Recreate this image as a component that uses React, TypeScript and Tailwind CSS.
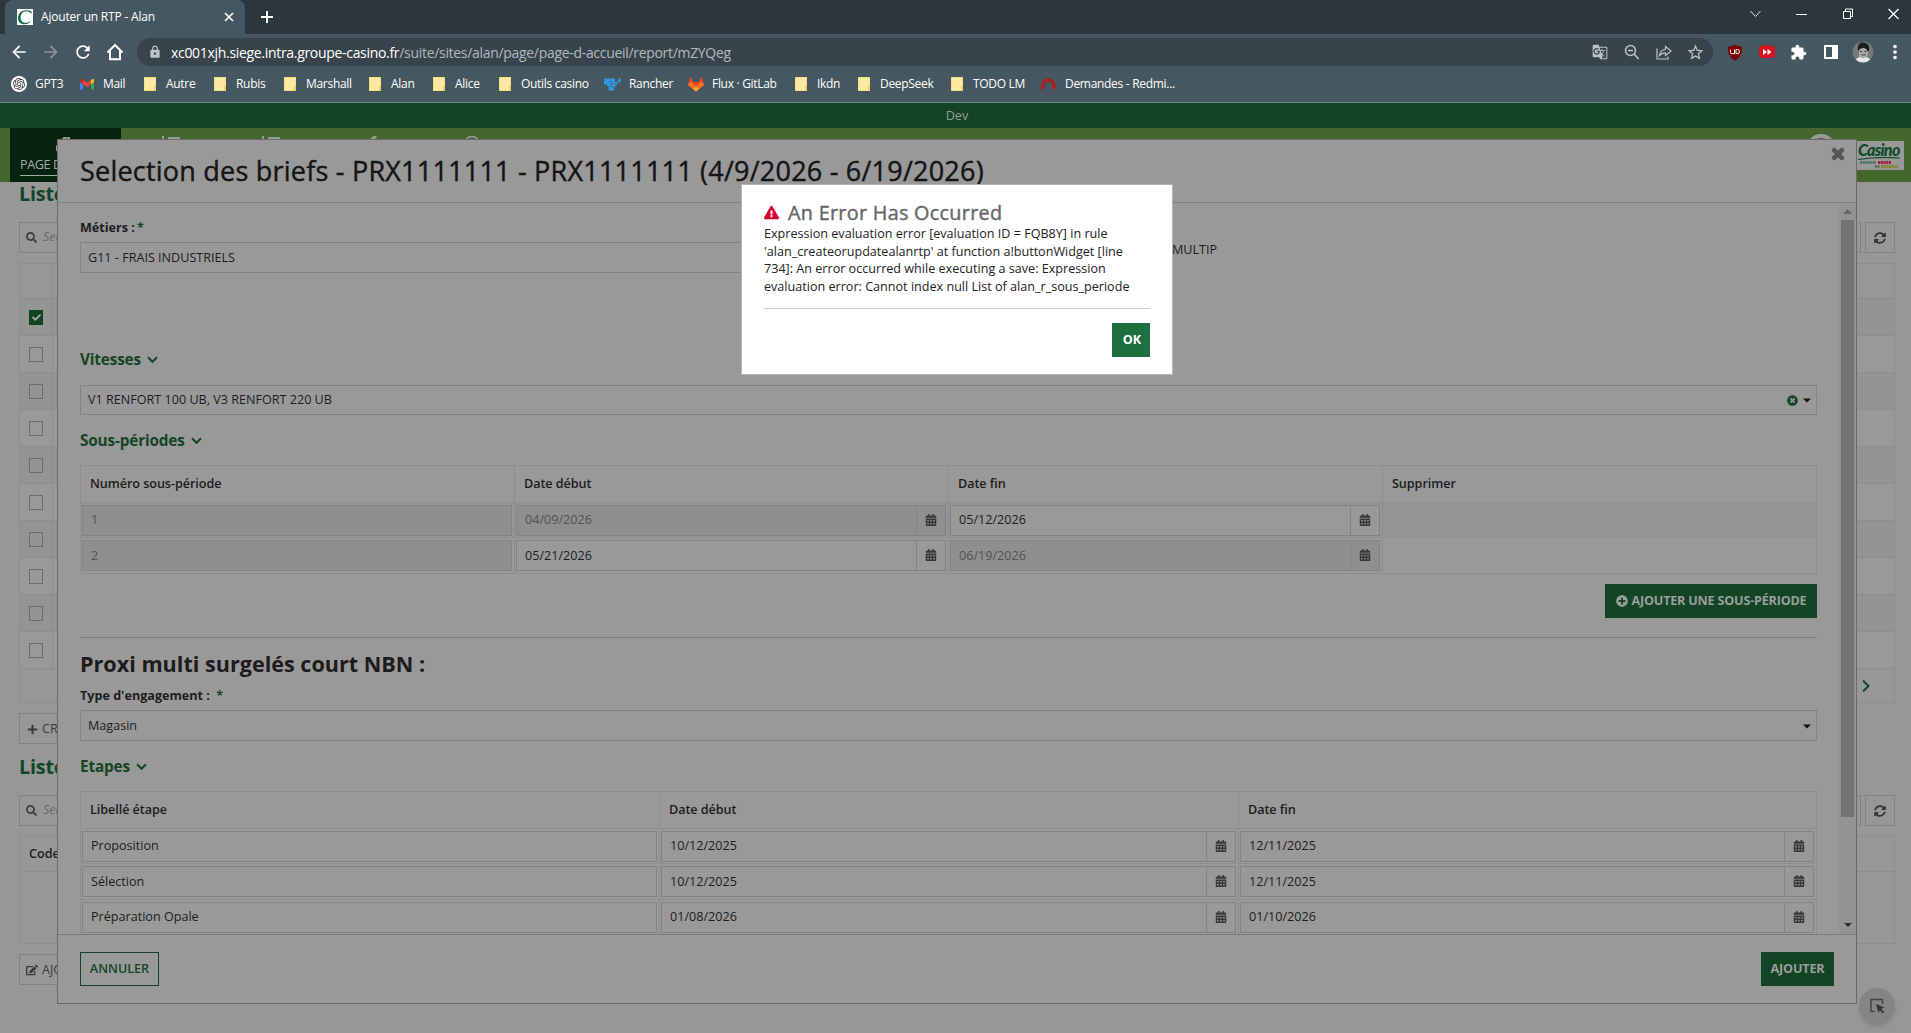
import type { ReactNode } from "react";
import {
  FaCalendarAlt,
  FaCheck,
  FaEdit,
  FaExclamationTriangle,
  FaPlus,
  FaPlusCircle,
  FaSearch,
  FaSyncAlt,
  FaTimes,
  FaTimesCircle,
} from "react-icons/fa";
import {
  MdArrowBack,
  MdArrowForward,
  MdExtension,
  MdGTranslate,
  MdLock,
  MdMoreVert,
  MdRefresh,
  MdStarBorder,
} from "react-icons/md";
import { SiOpenai } from "react-icons/si";

/* ---------- browser icons ---------- */

function FolderIcon() {
  return (
    <svg width="16" height="16" viewBox="0 0 16 16">
      <path d="M2 1h12v14H2z" fill="#f5cf62" />
      <path d="M2.500 1.500h11v8.500h-1.500v4.500H2.500z" fill="#ffe9a2" />
    </svg>
  );
}

function GptIcon() {
  return (
    <span className="flex h-4 w-4 items-center justify-center rounded-full bg-white">
      <SiOpenai size={12} color="#333" />
    </span>
  );
}

function MailIcon() {
  return (
    <svg width="16" height="16" viewBox="0 0 16 16">
      <path d="M1 4v9.5h3V7.5z" fill="#4285f4" />
      <path d="M15 4v9.5h-3V7.5z" fill="#34a853" />
      <path d="M12 3.6 15 3v3l-3 2.3z" fill="#fbbc04" />
      <path d="M1 3l3 .6v4.7L1 6z" fill="#c5221f" />
      <path d="M4 3.8 8 7l4-3.2v4.5L8 11.3 4 8.300z" fill="#ea4335" />
    </svg>
  );
}

function RancherIcon() {
  return (
    <svg width="17" height="16" viewBox="0 0 17 16">
      <path
        d="M0 2.500h11V6h2.500V3.500H15V2h1.500v4.500H13v2.500h-1.500v2H10v3.500H4.500V10H3V8.500H0z"
        fill="#3497da"
      />
      <path d="M4.500 5.500h3v2h4M6.500 8v2.500h3" stroke="#2874b0" fill="none" />
    </svg>
  );
}

function GitlabIcon() {
  return (
    <svg width="16" height="16" viewBox="0 0 16 16">
      <path d="M8 15.500 0 9.300 2.500 1l2.700 5h5.600l2.700-5L16 9.300z" fill="#fc6d26" />
      <path d="M2.500 1l2.700 5h5.600l2.700-5 1.300 5-3.600.8L8 11 4.800 6.800 1.200 6z" fill="#e24329" />
      <path d="M8 15.500 4.800 12.800 8 10.500l3.200 2.300z" fill="#fca326" />
    </svg>
  );
}

function RedmineIcon() {
  return (
    <svg width="17" height="16" viewBox="0 0 17 16">
      <path
        d="M2.500 13.500C2.500 6 5 4 8.500 4s6 2 6 9.500"
        stroke="#b3191f"
        strokeWidth="3.400"
        strokeDasharray="3.600 .5"
        fill="none"
      />
    </svg>
  );
}

const bookmarks: { label: string; icon: ReactNode; width: string }[] = [
  { label: "GPT3", icon: <GptIcon />, width: "w-[68px]" },
  { label: "Mail", icon: <MailIcon />, width: "w-[63px]" },
  { label: "Autre", icon: <FolderIcon />, width: "w-[70px]" },
  { label: "Rubis", icon: <FolderIcon />, width: "w-[70px]" },
  { label: "Marshall", icon: <FolderIcon />, width: "w-[85px]" },
  { label: "Alan", icon: <FolderIcon />, width: "w-[64px]" },
  { label: "Alice", icon: <FolderIcon />, width: "w-[66px]" },
  { label: "Outils casino", icon: <FolderIcon />, width: "w-[107px]" },
  { label: "Rancher", icon: <RancherIcon />, width: "w-[84px]" },
  { label: "Flux · GitLab", icon: <GitlabIcon />, width: "w-[105px]" },
  { label: "Ikdn", icon: <FolderIcon />, width: "w-[63px]" },
  { label: "DeepSeek", icon: <FolderIcon />, width: "w-[93px]" },
  { label: "TODO LM", icon: <FolderIcon />, width: "w-[91px]" },
  { label: "Demandes - Redmi...", icon: <RedmineIcon />, width: "w-[150px]" },
];

function TabStrip() {
  return (
    <div className="flex h-[34px] bg-[#2b363d] pl-[5px] text-white">
      <div className="flex h-full w-[240px] items-center rounded-t-lg bg-[#455760] pl-3 pr-[11px]">
        <svg width="16" height="16" viewBox="0 0 16 16">
          <path d="M0 0h16v16H0z" fill="#fff" />
          <path
            d="M14.500 2.500V5C13 2.800 11.300 2.200 9.500 2.200 5.500 2.200 3.600 5 3.600 8.500c0 3.300 2 5.300 5 5.300 2 0 3.700-.6 5.200-1.800-1.400 2.100-3.600 3.300-6.300 3.300C3.600 15.300 1 12.800 1 9c0-4.300 3.300-7.800 8.300-7.800 2 0 3.700.5 5.200 1.300z"
            fill="#0f6b3a"
          />
        </svg>
        <span className="ml-2 text-[12px] tracking-[-0.2px]">Ajouter un RTP - Alan</span>
        <svg className="ml-auto" width="10" height="10" viewBox="0 0 10 10">
          <path d="M1 1l8 8M9 1L1 9" stroke="#fff" strokeWidth="1.600" />
        </svg>
      </div>
      <svg className="ml-4 mt-[11px]" width="12" height="12" viewBox="0 0 12 12">
        <path d="M6 0v12M0 6h12" stroke="#fff" strokeWidth="2" />
      </svg>
      <div className="ml-auto mr-3 mt-2 flex h-3 items-center gap-[35px]">
        <svg width="11" height="12" viewBox="0 0 11 12">
          <path d="M.5 3l5 5.500 5-5.500" stroke="#dfe3e5" fill="none" />
        </svg>
        <svg width="11" height="12" viewBox="0 0 11 12">
          <path d="M0 6.500h11" stroke="#fff" />
        </svg>
        <svg width="11" height="12" viewBox="0 0 11 12">
          <path d="M1.500 3.500h7v7h-7zM3.500 3V1h7v7.500H9" stroke="#fff" fill="none" />
        </svg>
        <svg width="11" height="12" viewBox="0 0 11 12">
          <path d="M.5 1l10 10M10.500 1l-10 10" stroke="#fff" strokeWidth="1.200" />
        </svg>
      </div>
    </div>
  );
}

function Toolbar() {
  return (
    <div className="flex h-9 items-center bg-[#455760] pl-[9px] text-white">
      <MdArrowBack size={20} />
      <MdArrowForward size={20} className="ml-3 text-[#8b979d]" />
      <MdRefresh size={20} className="ml-3" />
      <svg className="ml-3" width="20" height="20" viewBox="0 0 20 20">
        <path d="M2.500 10.500 10 3l7.500 7.500M5 9v8.200h10V9" stroke="#fff" strokeWidth="2" fill="none" />
      </svg>
      <div className="ml-3 flex h-7 w-[1576px] items-center rounded-full bg-[#38444b] pl-[11px] pr-2 text-[#bcc3c6]">
        <MdLock size={14} />
        <span className="ml-[9px] text-[14px] tracking-[-0.31px] text-[#b0b8bc]">
          <span className="text-white">xc001xjh.siege.intra.groupe-casino.fr</span>
          /suite/sites/alan/page/page-d-accueil/report/mZYQeg
        </span>
        <MdGTranslate size={16} className="ml-auto" />
        <svg className="ml-4" width="16" height="16" viewBox="0 0 16 16">
          <circle cx="6.500" cy="6.500" r="5" stroke="#bcc3c6" strokeWidth="1.500" fill="none" />
          <path d="M4 6.500h5M10.200 10.200l4.500 4.800" stroke="#bcc3c6" strokeWidth="1.600" />
        </svg>
        <svg className="ml-4" width="16" height="16" viewBox="0 0 16 16">
          <path
            d="M1 4.500V15h11v-2.500M3.500 11.500c.5-3.800 2.500-5.800 6-6V2.500L15 7l-5.500 4.500V8.800c-2.600 0-4.400.9-6 2.700z"
            stroke="#bcc3c6"
            strokeWidth="1.200"
            fill="none"
          />
        </svg>
        <MdStarBorder size={19} className="ml-[14px]" />
      </div>
      <div className="ml-[14px] flex items-center">
        <svg width="16" height="17" viewBox="0 0 16 17">
          <path d="M8 .5c2 1.500 4.500 2 7 2 0 6-.5 10.500-7 14-6.500-3.500-7-8-7-14 2.500 0 5-.5 7-2z" fill="#800000" />
          <path d="M3.500 5.500v3.200q0 1 1.200 1H7.500V5.500M9 5.500v4.200h1.500q2-.3 2-2.100t-2-2.100z" stroke="#fff" fill="none" />
        </svg>
        <svg className="ml-4" width="16" height="16" viewBox="0 0 16 16">
          <rect x="0" y="1.500" width="16" height="12.500" rx="4" fill="#d8121a" />
          <path d="M4 5l4 3-4 3zM8.500 5l4 3-4 3z" fill="#fff" />
        </svg>
        <MdExtension size={17} className="ml-[15px]" />
        <svg className="ml-4" width="16" height="16" viewBox="0 0 16 16">
          <path d="M1 1h14v14H1zM3 3v10h6V3z" fill="#fff" fillRule="evenodd" />
        </svg>
        <svg className="ml-[13px]" width="22" height="22" viewBox="0 0 22 22">
          <clipPath id="face">
            <circle cx="11" cy="11" r="10.500" />
          </clipPath>
          <g clipPath="url(#face)">
            <path d="M0 0h22v22H0z" fill="#77787a" />
            <path d="M7 18V8q4-4 9 0v6l-3 4z" fill="#a8a8a8" />
            <path d="M6 10C5 3 8 1 11.500 1.500S18 4 17 9.500l-1.500 1C15 7 11 6 8 8z" fill="#1d1d1d" />
            <path d="M3 22q0-5 5-6 3 2.500 6 0 5 1 5 6z" fill="#e6e6e6" />
            <path d="M8 10.500h2m2.500 0h2M9.500 13.500q2 1.200 4 0" stroke="#333" fill="none" />
          </g>
        </svg>
        <MdMoreVert size={22} className="ml-[10px]" />
      </div>
    </div>
  );
}

function BookmarksBar() {
  return (
    <div className="flex h-[33px] items-center border-b border-[#73857f] bg-[#455760] pb-1 pl-[11px] text-[12px] text-white">
      {bookmarks.map((b) => (
        <div key={b.label} className={`flex shrink-0 items-center gap-2 ${b.width}`}>
          {b.icon}
          <span className="whitespace-nowrap tracking-[-0.3px]">{b.label}</span>
        </div>
      ))}
    </div>
  );
}

/* ---------- page behind the dialog ---------- */

function SearchRow() {
  return (
    <div className="flex h-[31px] justify-between">
      <div className="flex w-[1842px] items-center border border-[#828282] pl-1.5 text-[12.6px] italic text-[#6a6a6a]">
        <FaSearch size={11} className="mr-1.5 text-[#3c3c3c]" />
        Search
      </div>
      <div className="flex w-[30px] items-center justify-center border border-[#828282] text-[#333]">
        <FaSyncAlt size={12} />
      </div>
    </div>
  );
}

function SiteNav() {
  return (
    <div className="flex h-[54px] bg-[#44672f] pl-[10px]">
      <div className="w-[111px] bg-[#06230f] pl-[10px] text-[#a4aaa6]">
        <svg className="ml-[36px] mt-[9px]" width="18" height="14" viewBox="0 0 18 14">
          <path d="M0 9 7.500 0H10l1.500 1V0H14v5l4 4v5H0z" fill="#999" />
        </svg>
        <div className="w-[91px] overflow-hidden whitespace-nowrap border-b border-[#a4aaa6] pb-px pt-[5px] text-[12.600px] leading-[18px] tracking-[-0.4px]">
          PAGE D'ACCUEIL
        </div>
      </div>
      <div className="flex gap-[82px] pl-[41px] pt-[8px]">
        <svg width="18" height="12" viewBox="0 0 18 12">
          <path d="M1 0v12M6 2h12" stroke="#999" strokeWidth="2" />
        </svg>
        <svg width="18" height="12" viewBox="0 0 18 12">
          <path d="M1 0v12M6 2h12" stroke="#999" strokeWidth="2" />
        </svg>
        <svg className="ml-[4px]" width="18" height="12" viewBox="0 0 18 12">
          <path d="M4 5 10 0" stroke="#999" strokeWidth="3" />
        </svg>
        <svg width="18" height="12" viewBox="0 0 18 12" className="-ml-[3px]">
          <circle cx="9" cy="7.500" r="7" stroke="#999" strokeWidth="1.600" fill="none" />
        </svg>
      </div>
      <div className="ml-auto mr-[20px] mt-1.5 h-[30px] w-[30px] rounded-full border-4 border-[#999] bg-[#4d5a55]" />
      <div className="mr-[7px] mt-[13px] h-[29px] w-[48px] bg-[#989898]">
        <div className="pl-[2px] pt-px font-['Lato'] text-[16px] font-black italic leading-[15px] tracking-[-0.7px] text-[#0b4a2b]">
          Casino
        </div>
        <svg width="48" height="13" viewBox="0 0 48 13">
          <path d="M2 2.500Q22-.5 44 1" stroke="#0b4a2b" strokeWidth="1.200" fill="none" />
          <path d="M4 5.500h16" stroke="#3c6650" strokeWidth="2" strokeDasharray="2 .6" />
          <path d="M22 5.500h13" stroke="#9c2345" strokeWidth="3" strokeDasharray="2.200 .5" />
          <path d="M19 9.500h5" stroke="#3c6650" strokeWidth="2" strokeDasharray="2 .6" />
          <path d="M25 9.500h17" stroke="#84852c" strokeWidth="3" strokeDasharray="2.200 .5" />
        </svg>
      </div>
    </div>
  );
}

const listRows = [true, false, false, false, false, false, false, false, false, false];

function Page() {
  return (
    <div className="h-[851px] bg-[#979797] pl-[19px] pr-4">
      <h2 className="h-[40px] text-[19.800px] font-bold leading-[24px] tracking-[-0.2px] text-[#134526]">Liste</h2>
      <SearchRow />
      <div className="mt-[10px] border border-[#8d8d8d]">
        <div className="h-[35px] border-b border-[#8d8d8d]">
          <div className="h-full w-[33px] border-r border-[#8d8d8d]" />
        </div>
        {listRows.map((checked, i) => (
          <div key={i} className="h-[37px] border-b border-[#8d8d8d] odd:bg-[#999] even:bg-[#949494]">
            <div className="flex h-full w-[33px] items-center border-r border-[#8d8d8d] pl-[9px]">
              {checked ? (
                <div className="flex h-[15px] w-[14px] items-center justify-center bg-[#104424] text-[#aaa]">
                  <FaCheck size={9} />
                </div>
              ) : (
                <div className="h-[15px] w-[14px] border border-[#6c6c6c]" />
              )}
            </div>
          </div>
        ))}
        <div className="flex h-[33px] items-center justify-end pr-[24px]">
          <svg width="8" height="12" viewBox="0 0 8 12">
            <path d="M1 .5 6.500 6 1 11.500" stroke="#134526" strokeWidth="2" fill="none" />
          </svg>
        </div>
      </div>
      <div className="mt-[10px] flex h-[31px] w-[140px] items-center gap-1 border border-[#828282] pl-[7px] pt-px text-[12.600px] text-[#3a3a3a]">
        <FaPlus size={11} />
        CRÉER
      </div>
      <h2 className="mt-[10px] h-[41px] text-[19.800px] font-bold leading-[26px] tracking-[-0.2px] text-[#134526]">Liste</h2>
      <SearchRow />
      <div className="mt-[9px] h-[109px] border border-[#8d8d8d]">
        <div className="h-[36px] border-b border-[#8d8d8d] pl-[9px] text-[12.600px] font-semibold leading-[35px] text-[#1c1c1c]">
          Code
        </div>
      </div>
      <div className="mt-[10px] flex h-[31px] w-[140px] items-center gap-1 border border-[#828282] pl-[6px] pt-px text-[12.600px] text-[#3a3a3a]">
        <FaEdit size={12} />
        AJOUTER
      </div>
    </div>
  );
}

/* ---------- form dialog ---------- */

function Caret() {
  return (
    <svg width="8" height="5" viewBox="0 0 8 5">
      <path d="M0 .5h8L4 4.500z" fill="#111" />
    </svg>
  );
}

function SectionTitle({ text, className }: { text: string; className: string }) {
  return (
    <div
      className={`flex h-[22px] items-center gap-1.5 pb-0.5 text-[15.300px] font-bold tracking-[-0.15px] text-[#134526] ${className}`}
    >
      {text}
      <svg className="mt-0.5" width="11" height="8" viewBox="0 0 11 8">
        <path d="M1 1.200 5.500 5.800 10 1.200" stroke="#134526" strokeWidth="2" fill="none" />
      </svg>
    </div>
  );
}

function DateField({ value, disabled }: { value: string; disabled?: boolean }) {
  return (
    <div className={`flex h-[31px] border border-[#838383] ${disabled ? "bg-[#8f8f8f] text-[#525252]" : "bg-[#999] text-[#1d1d1d]"}`}>
      <span className="flex-1 pl-[8px]">{value}</span>
      <span className="flex w-[29px] items-center justify-center border-l border-[#838383] pb-0.5 text-[#383838]">
        <FaCalendarAlt size={12} />
      </span>
    </div>
  );
}

function TextField({ value, disabled }: { value: string; disabled?: boolean }) {
  return (
    <div className={`h-[31px] border border-[#838383] pl-[8px] ${disabled ? "bg-[#8f8f8f] text-[#525252]" : "bg-[#999] text-[#1d1d1d]"}`}>
      {value}
    </div>
  );
}

function HeadCell({ children }: { children: ReactNode }) {
  return (
    <div className="h-[37px] border-b border-r border-[#8e8e8e] pl-[9px] font-semibold leading-[36px] tracking-[-0.05px] text-[#1c1c1c]">
      {children}
    </div>
  );
}

function Cell({ children }: { children?: ReactNode }) {
  return <div className="border-b border-r border-[#8e8e8e] pb-px pl-px pr-[2px] pt-[2px]">{children}</div>;
}

const steps = [
  { label: "Proposition", start: "10/12/2025", end: "12/11/2025", row: "h-[35px] leading-[28px]" },
  { label: "Sélection", start: "10/12/2025", end: "12/11/2025", row: "h-[36px] leading-[29px]" },
  { label: "Préparation Opale", start: "01/08/2026", end: "01/10/2026", row: "h-[36px] leading-[28px]" },
];

function FormBody() {
  return (
    <div className="w-[1781px] overflow-hidden pl-[22px] pt-4">
      <div className="w-[1737px] text-[12.600px] text-[#1d1d1d]">
        <div className="h-[18px] font-bold leading-[18px]">
          Métiers :<span className="ml-0.5 text-[#134526]">*</span>
        </div>
        <div className="mt-[5px] flex">
          <div className="h-[31px] w-[860px] border border-[#838383] pl-[7px] leading-[29px]">
            G11 - FRAIS INDUSTRIELS
          </div>
          <div className="ml-auto w-[645px] pt-px leading-[14px]">MULTIP</div>
        </div>

        <SectionTitle text="Vitesses" className="mt-[76px]" />
        <div className="mt-[14px] flex h-[30px] items-center border border-[#838383] pl-[7px] pr-[5px]">
          <span>V1 RENFORT 100 UB, V3 RENFORT 220 UB</span>
          <FaTimesCircle size={11} className="ml-auto mr-[5px] text-[#134526]" />
          <Caret />
        </div>

        <SectionTitle text="Sous-périodes" className="mt-[15px]" />
        <div className="mt-[13px] border-l border-t border-[#8e8e8e]">
          <div className="grid grid-cols-[434px_434px_434px_434px]">
            <HeadCell>Numéro sous-période</HeadCell>
            <HeadCell>Date début</HeadCell>
            <HeadCell>Date fin</HeadCell>
            <HeadCell>Supprimer</HeadCell>
          </div>
          <div className="grid h-[35px] grid-cols-[434px_434px_434px_434px] bg-[#959595] leading-[28px]">
            <Cell><TextField value="1" disabled /></Cell>
            <Cell><DateField value="04/09/2026" disabled /></Cell>
            <Cell><DateField value="05/12/2026" /></Cell>
            <Cell />
          </div>
          <div className="grid h-[36px] grid-cols-[434px_434px_434px_434px] leading-[29px]">
            <Cell><TextField value="2" disabled /></Cell>
            <Cell><DateField value="05/21/2026" /></Cell>
            <Cell><DateField value="06/19/2026" disabled /></Cell>
            <Cell />
          </div>
        </div>

        <div className="mt-[10px] flex justify-end">
          <button className="flex h-[34px] w-[212px] items-center justify-center gap-1 bg-[#144426] font-bold tracking-[-0.2px] text-[#999f9b]">
            <FaPlusCircle size={12} />
            AJOUTER UNE SOUS-PÉRIODE
          </button>
        </div>
        <div className="mt-[19px] h-px bg-[#7d7d7d]" />

        <h2 className="mt-3 h-7 text-[21.600px] font-bold leading-[28px] text-[#1c1c1c]">
          Proxi multi surgelés court NBN :
        </h2>
        <div className="mt-[9px] h-[18px] font-bold leading-[18px]">
          Type d'engagement : <span className="ml-[3px] text-[#134526]">*</span>
        </div>
        <div className="mt-[5px] flex h-[31px] items-center border border-[#838383] pl-[7px] pr-[5px]">
          <span className="pt-px">Magasin</span>
          <span className="ml-auto pt-px">
            <Caret />
          </span>
        </div>

        <SectionTitle text="Etapes" className="mt-[15px]" />
        <div className="mt-[13px] border-l border-t border-[#8e8e8e]">
          <div className="grid grid-cols-[579px_579px_578px]">
            <HeadCell>Libellé étape</HeadCell>
            <HeadCell>Date début</HeadCell>
            <HeadCell>Date fin</HeadCell>
          </div>
          {steps.map((s) => (
            <div key={s.label} className={`grid grid-cols-[579px_579px_578px] ${s.row}`}>
              <Cell><TextField value={s.label} /></Cell>
              <Cell><DateField value={s.start} /></Cell>
              <Cell><DateField value={s.end} /></Cell>
            </div>
          ))}
        </div>
      </div>
    </div>
  );
}

function FormDialog() {
  return (
    <div className="absolute left-[57px] top-[139px] flex h-[865px] w-[1800px] flex-col border border-[#6b6b6b] bg-[#999]">
      <div className="flex h-[63px] shrink-0 justify-between border-b border-[#808080] pl-[22px] pr-[10px]">
        <h1 className="pt-[13px] text-[27px] leading-[36px] tracking-[0.22px] text-[#141414] [-webkit-text-stroke:0.4px_#141414]">
          Selection des briefs - PRX1111111 - PRX1111111 (4/9/2026 - 6/19/2026)
        </h1>
        <FaTimes size={16} className="mt-[6px] text-[#565656]" stroke="#565656" strokeWidth={50} />
      </div>
      <div className="flex h-[731px] shrink-0 overflow-hidden">
        <FormBody />
        <div className="flex w-[17px] flex-col items-center bg-[#939393]">
          <svg className="mt-[6px]" width="9" height="5" viewBox="0 0 9 5">
            <path d="M0 5 4.500 0 9 5z" fill="#666" />
          </svg>
          <div className="mt-[6px] h-[597px] w-[13px] bg-[#737373]" />
          <svg className="mb-[7px] mt-auto" width="8" height="4" viewBox="0 0 8 4">
            <path d="M0 0h8L4 4z" fill="#2d2d2d" />
          </svg>
        </div>
      </div>
      <div className="flex flex-1 items-start justify-between border-t border-[#7b7b7b] pl-[22px] pr-[22px] pt-[17px] text-[12.600px]">
        <button className="h-[34px] w-[79px] border border-[#134526] font-semibold text-[#134526]">ANNULER</button>
        <button className="h-[34px] w-[73px] bg-[#144426] font-bold tracking-[-0.15px] text-[#999f9b]">AJOUTER</button>
      </div>
    </div>
  );
}

function ErrorDialog() {
  return (
    <div className="absolute left-[741px] top-[184px] h-[191px] w-[432px] border border-[#b5b5b5] bg-white px-[22px] pt-[15px]">
      <div className="flex h-[25px] items-center">
        <FaExclamationTriangle size={15} className="text-[#d50032]" />
        <span className="ml-[9px] text-[19.800px] tracking-[0.3px] text-[#666] [-webkit-text-stroke:0.4px_#666]">
          An Error Has Occurred
        </span>
      </div>
      <p className="whitespace-pre text-[12.600px] leading-[17.700px] text-[#222]">
        {"Expression evaluation error [evaluation ID = FQB8Y] in rule\n'alan_createorupdatealanrtp' at function a!buttonWidget [line\n734]: An error occurred while executing a save: Expression\nevaluation error: Cannot index null List of alan_r_sous_periode"}
      </p>
      <div className="mt-[12px] flex justify-end border-t border-[#ccc] pt-[14px]">
        <button className="h-[34px] w-[38px] bg-[#1d6f3f] pl-0.5 pt-0.5 text-[12.600px] font-bold text-white">OK</button>
      </div>
    </div>
  );
}

export default function App() {
  return (
    <div className="relative h-[1033px] w-[1911px] overflow-hidden bg-[#979797] font-['Open_Sans','Noto_Sans',sans-serif]">
      <TabStrip />
      <Toolbar />
      <BookmarksBar />
      <div className="h-[25px] bg-[#144426] pl-[3px] text-center text-[12.600px] leading-[25px] text-[#929e96]">Dev</div>
      <SiteNav />
      <Page />
      <FormDialog />
      <ErrorDialog />
      <div className="absolute left-[1859px] top-[988px] flex h-9 w-9 items-center justify-center rounded-full bg-[#858585] shadow-md">
        <svg width="16" height="16" viewBox="0 0 16 16">
          <path d="M5.500 13.500H2V1.500h11.500V6" stroke="#444" strokeWidth="1.500" fill="none" />
          <path d="M7 6l8.500 3.600-3.400 1.300 3 3-1.300 1.300-3-3L9.500 15z" fill="#333" />
        </svg>
      </div>
    </div>
  );
}
